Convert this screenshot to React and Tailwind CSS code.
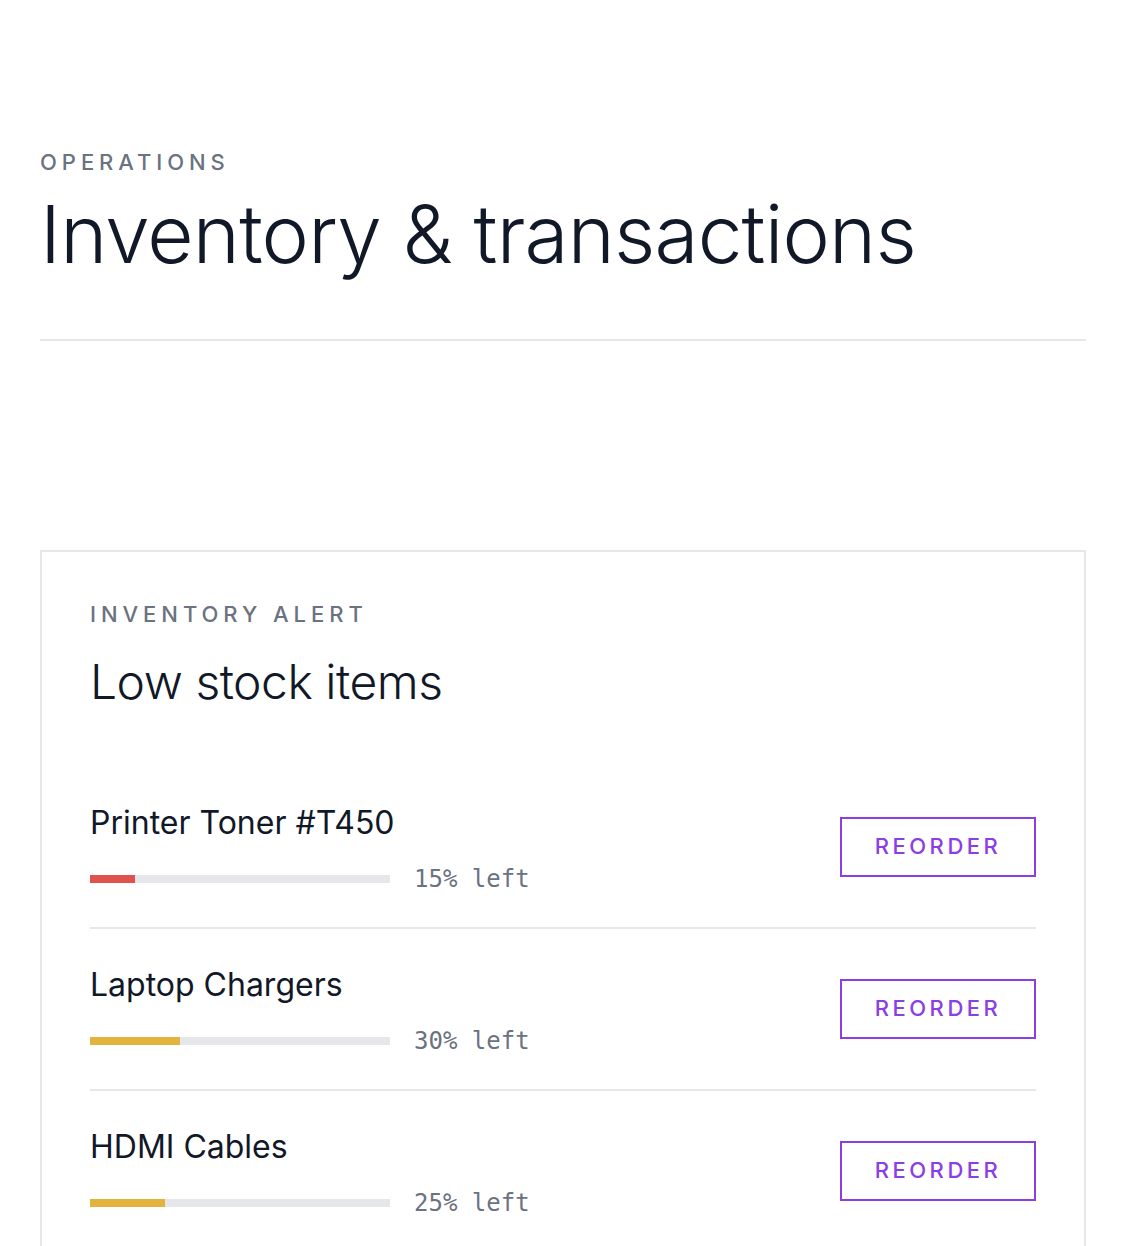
import React from 'react';

const items = [
  { name: 'Printer Toner #T450', pct: 15, color: 'bg-[#df524d]' },
  { name: 'Laptop Chargers', pct: 30, color: 'bg-[#e4b33e]' },
  { name: 'HDMI Cables', pct: 25, color: 'bg-[#e4b33e]' },
];

export default function App() {
  return (
    <div className="min-h-screen bg-white font-['Inter','Noto_Sans',sans-serif] text-[#111827]">
      <div className="ml-10 w-[1046px] pt-[148px]">
        {/* page header */}
        <div className="border-b-2 border-[#e5e7eb] pb-[65px]">
          <div className="text-[22px] leading-[28px] font-medium tracking-[0.225em] text-[#6b7280]">
            OPERATIONS
          </div>
          <h1 className="mt-[18px] text-[80px] leading-none font-light tracking-[-0.01em]">
            Inventory &amp; transactions
          </h1>
        </div>

        {/* low stock card */}
        <div className="mt-[209px] border-2 border-[#e5e7eb] p-12">
          <div className="text-[22px] leading-[28px] font-medium tracking-[0.225em] text-[#6b7280]">
            INVENTORY ALERT
          </div>
          <h2 className="mt-[26px] text-[48px] leading-[56px] font-light tracking-[-0.01em]">
            Low stock items
          </h2>

          <div className="mt-[57px]">
            {items.map((item, i) => (
              <div
                key={item.name}
                className={`flex items-center justify-between pt-9 pb-8 ${
                  i < items.length - 1 ? 'border-b-2 border-[#e5e7eb]' : ''
                }`}
              >
                <div>
                  <div className="text-[32px] leading-[40px]">{item.name}</div>
                  <div className="mt-5 flex h-8 items-center gap-6">
                    <div className="h-2 w-[300px] bg-[#e5e7eb]">
                      <div className={`h-full ${item.color}`} style={{ width: `${item.pct}%` }} />
                    </div>
                    <span className="font-['DejaVu_Sans_Mono',monospace] text-[24px] leading-8 text-[#6b7280]">
                      {item.pct}% left
                    </span>
                  </div>
                </div>
                <button className="mb-[5px] h-[60px] w-[196px] border-2 border-[#8b3ee3] text-[22px] font-medium tracking-[0.16em] text-[#8b3ee3]">
                  REORDER
                </button>
              </div>
            ))}
          </div>
        </div>
      </div>
    </div>
  );
}
